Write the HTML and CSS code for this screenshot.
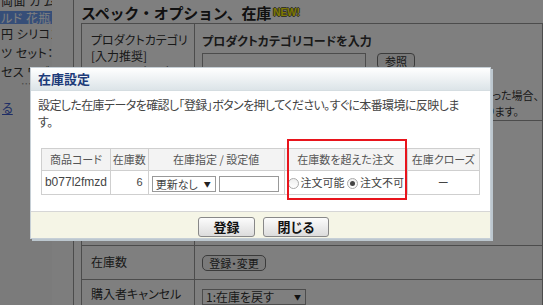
FILE: index.html
```html
<!DOCTYPE html>
<html lang="ja">
<head>
<meta charset="utf-8">
<title>在庫設定</title>
<link rel="stylesheet" href="styles.css">
</head>
<body>
<div class="page">
  <aside class="sidebar">
    <div class="side-item cut">両面 カ ム</div>
    <div class="side-item sel">ルド 花瓶 花器</div>
    <div class="side-item">円 シリコン</div>
    <div class="side-item">ツ セット：</div>
    <div class="side-item">セス ワゴン</div>
    <div class="side-dots">・・・</div>
    <a class="side-link" href="#">る</a>
  </aside>
  <div class="gutter"></div>
  <main class="main">
    <h2 class="sec-title">スペック・オプション、在庫<span class="new">NEW!</span></h2>
    <table class="spec">
      <tr class="row-cat">
        <td class="label">プロダクトカテゴリ<br>[入力推奨]<br>[X]ショッピング</td>
        <td class="value">
          <div class="strong">プロダクトカテゴリコードを入力</div>
          <div class="field-line"><span class="text-box"></span><span class="pill-btn">参照</span></div>
          <div class="note l1">正しいプロダクトカテゴリコードを入力しなかった場合、</div>
          <div class="note l2">表示されない可能性があります。</div>
        </td>
      </tr>
      <tr class="row-hidden">
        <td class="label"></td>
        <td class="value"></td>
      </tr>
      <tr class="row-stock">
        <td class="label">在庫数</td>
        <td class="value"><span class="round-btn">登録・変更</span></td>
      </tr>
      <tr class="row-cancel">
        <td class="label">購入者キャンセル<br>在庫戻し設定</td>
        <td class="value"><span class="fake-select wide">1:在庫を戻す<span class="arrow">▼</span></span></td>
      </tr>
    </table>
  </main>
</div>

<div class="overlay"></div>

<div class="dialog">
  <div class="dlg-head">在庫設定</div>
  <div class="dlg-body">
    <p class="msg">設定した在庫データを確認し「登録」ボタンを押してください。すぐに本番環境に反映します。</p>
    <table class="stock">
      <tr class="head">
        <th class="c1">商品コード</th>
        <th class="c2">在庫数</th>
        <th class="c3">在庫指定 / 設定値</th>
        <th class="c4">在庫数を超えた注文</th>
        <th class="c5">在庫クローズ</th>
      </tr>
      <tr class="data">
        <td class="code">b077l2fmzd</td>
        <td class="num">6</td>
        <td class="spec-cell"><span class="fake-select">更新なし<span class="arrow">▼</span></span><span class="small-input"></span></td>
        <td class="radios"><span class="radio"></span>注文可能 <span class="radio on"></span>注文不可</td>
        <td class="dash">ー</td>
      </tr>
    </table>
    <div class="highlight"></div>
  </div>
  <div class="dlg-foot">
    <span class="btn">登録</span>
    <span class="btn">閉じる</span>
  </div>
</div>
</body>
</html>
```
FILE: styles.css
```css
* { box-sizing: border-box; }
html, body { margin: 0; padding: 0; }
body {
  width: 543px;
  height: 305px;
  overflow: hidden;
  position: relative;
  background: #fff;
  color: #333;
  font-family: "Noto Sans CJK JP", sans-serif;
  font-size: 12px;
  font-feature-settings: "palt";
  line-height: 17px;
}

.page { display: flex; height: 305px; }

.sidebar {
  width: 52px;
  flex: none;
  background: #f6f6f6;
  overflow: hidden;
  white-space: nowrap;
}
.side-item { height: 19px; line-height: 19px; padding-left: 1px; color: #333; letter-spacing: 0.5px; }
.side-item.cut { height: 11px; line-height: 2px; overflow: hidden; }
.side-item.sel { background: #6d9cf0; color: #fff; height: 13px; line-height: 13px; }
.side-dots { height: 9px; line-height: 4px; color: #999; padding-left: 21px; font-size: 7px; overflow: hidden; }
.side-link { display: block; margin-top: 9px; line-height: 18px; color: #3b5bcc; text-decoration: underline; padding-left: 2px; }

.gutter { width: 22px; flex: none; background: #fafafa; border-right: 1px solid #999; }

.main { flex: 1; padding-left: 7px; overflow: hidden; }
.sec-title {
  margin: 0;
  height: 23px;
  line-height: 26px;
  font-size: 15px;
  letter-spacing: -0.2px;
  font-feature-settings: "palt" 0;
  font-weight: bold;
  color: #222;
  white-space: nowrap;
}
.new {
  font-size: 10px;
  font-weight: bold;
  letter-spacing: 0;
  color: #fff200;
  vertical-align: 3px;
  margin-left: 2px;
  text-shadow: 1px 0 0 #665, -1px 0 0 #665, 0 1px 0 #665, 0 -1px 0 #665;
  font-family: "Liberation Sans", sans-serif;
}

.spec { border-collapse: collapse; width: 462px; }
.spec td { border: 1px solid #999; vertical-align: top; padding: 0; }
.spec .label { width: 113px; padding-left: 9px; color: #333; }
.spec .value { padding-left: 7px; }
.row-cat td { height: 97px; padding-top: 8px; }
.row-cat .label { line-height: 16px; }
.strong { font-weight: bold; line-height: 17px; }
.field-line { display: flex; align-items: center; gap: 11px; margin-top: 4px; height: 15px; }
.text-box { width: 164px; height: 15px; border: 1px solid #999; background: #fff; }
.pill-btn { width: 38px; height: 16px; border: 1px solid #777; border-radius: 4px; background: #f4f4f4; text-align: center; font-size: 11px; line-height: 14px; }
.note { white-space: nowrap; text-align: right; font-size: 11px; line-height: 16px; overflow: hidden; }
.note.l1 { margin-top: 19px; padding-right: 3px; }
.note.l2 { padding-right: 23px; }
.row-hidden td { height: 125px; }
.row-stock td { height: 34px; vertical-align: middle; }
.row-stock .label { padding-bottom: 3px; }
.row-cancel td { padding-top: 5px; }
.row-cancel .label { line-height: 17px; }
.round-btn {
  display: inline-block;
  width: 64px; height: 16px;
  border: 1px solid #777;
  border-radius: 5px;
  background: #f4f4f4;
  text-align: center;
  font-size: 11px;
  line-height: 14px;
}
.fake-select {
  display: inline-flex;
  justify-content: space-between;
  align-items: center;
  height: 16px;
  border: 1px solid #999;
  background: #fff;
  padding: 0 4px 0 3px;
  font-size: 12px;
  line-height: 14px;
}
.fake-select.wide { width: 104px; margin-top: 4px; }
.arrow { font-size: 7px; margin-left: 4px; color: #222; }

.overlay {
  position: absolute;
  inset: 0;
  background: rgba(0, 0, 0, 0.5);
}

.dialog {
  position: absolute;
  left: 30px;
  top: 67px;
  width: 461px;
  background: #fff;
  border: 1px solid #c6cfd6;
  box-shadow: 2px 2px 0 #bcc7cf;
}
.dlg-head {
  height: 23px;
  padding-left: 7px;
  line-height: 22px;
  font-size: 13px;
  font-weight: bold;
  color: #1d3b79;
  background: linear-gradient(#ffffff, #dce4e8);
  border-bottom: 1px solid #d5dde1;
}
.dlg-body { position: relative; padding: 5px 10px 16px 7px; }
.msg { margin: 0; color: #444; font-size: 12px; letter-spacing: -0.6px; line-height: 17px; width: 434px; }
.stock {
  border-collapse: collapse;
  margin: 18px 0 0 3px;
  width: 439px;
  font-size: 11px;
  color: #444;
}
.stock th, .stock td { border: 1px solid #cfcfcf; padding: 0; }
.stock th { background: #f3f3f3; font-weight: normal; height: 22px; color: #555; text-align: center; }
.stock td { height: 24px; }
.c1 { width: 69px; }
.c2 { width: 38px; }
.c3 { width: 136px; }
.c4 { width: 123px; }
.c5 { width: 73px; }
.code { text-align: center; font-family: "Liberation Sans", sans-serif; font-size: 12px; color: #444; }
.num { text-align: right; padding-right: 5px !important; font-family: "Liberation Sans", sans-serif; }
.spec-cell { padding-left: 3px !important; white-space: nowrap; }
.spec-cell .fake-select { width: 64px; font-size: 11px; vertical-align: middle; }
.small-input { display: inline-block; width: 60px; height: 16px; border: 1px solid #999; margin-left: 3px; vertical-align: middle; }
.radios { white-space: nowrap; padding-left: 3px !important; }
.radio {
  display: inline-block;
  width: 11px; height: 11px;
  border: 1px solid #aaa;
  border-radius: 50%;
  background: linear-gradient(#eee, #fff);
  vertical-align: -2px;
  margin-right: 2px;
  position: relative;
}
.radio.on::after {
  content: "";
  position: absolute;
  left: 2px; top: 2px;
  width: 5px; height: 5px;
  border-radius: 50%;
  background: #444;
}
.dash { text-align: center; }
.highlight {
  position: absolute;
  left: 256px;
  top: 48px;
  width: 120px;
  height: 61px;
  border: 2px solid #e8141c;
}
.dlg-foot {
  height: 27px;
  background: #f5f5e6;
  border-top: 1px solid #d6d6d6;
  display: flex;
  justify-content: center;
  gap: 8px;
  padding-top: 5px;
  padding-left: 6px;
}
.btn {
  height: 20px;
  min-width: 57px;
  padding: 0 12px;
  border: 1px solid #888;
  border-radius: 3px;
  background: linear-gradient(#fcfcfc, #dcdcdc);
  text-align: center;
  font-size: 13px;
  font-weight: bold;
  line-height: 18px;
  color: #111;
}
.btn + .btn { min-width: 66px; }
```
